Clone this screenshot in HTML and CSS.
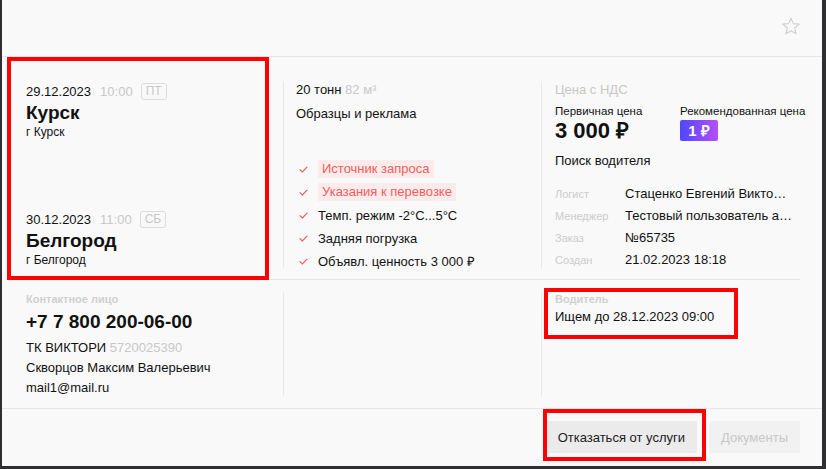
FILE: index.html
```html
<!DOCTYPE html>
<html lang="ru">
<head>
<meta charset="utf-8">
<title>Заявка</title>
<link rel="stylesheet" href="styles.css">
</head>
<body>
<div class="card">
  <header class="top">
    <svg class="star" width="18" height="18" viewBox="0 0 18 18"><polygon points="9,1.2 11.29,6.64 17.18,7.14 12.71,11.01 14.05,16.76 9,13.7 3.95,16.76 5.29,11.01 0.82,7.14 6.71,6.64" fill="none" stroke="#cfcfcf" stroke-width="1.1" stroke-linejoin="round"/></svg>
  </header>

  <section class="row row-main">
    <div class="col col-route">
      <div class="stop">
        <div class="when"><span class="date">29.12.2023</span><span class="time">10:00</span><span class="day">ПТ</span></div>
        <div class="city">Курск</div>
        <div class="addr">г Курск</div>
      </div>
      <div class="stop">
        <div class="when"><span class="date">30.12.2023</span><span class="time">11:00</span><span class="day">СБ</span></div>
        <div class="city">Белгород</div>
        <div class="addr">г Белгород</div>
      </div>
    </div>

    <div class="col col-cargo">
      <div class="line">20 тонн <span class="muted">82 м³</span></div>
      <div class="line cargo-name">Образцы и реклама</div>
      <ul class="checks">
        <li><svg class="tick" width="9" height="7" viewBox="0 0 9 7"><polyline points="0.7,3.4 3.3,6 8.3,0.8" fill="none" stroke="#f05353" stroke-width="1.1"/></svg><span class="hl">Источник запроса</span></li>
        <li><svg class="tick" width="9" height="7" viewBox="0 0 9 7"><polyline points="0.7,3.4 3.3,6 8.3,0.8" fill="none" stroke="#f05353" stroke-width="1.1"/></svg><span class="hl">Указания к перевозке</span></li>
        <li><svg class="tick" width="9" height="7" viewBox="0 0 9 7"><polyline points="0.7,3.4 3.3,6 8.3,0.8" fill="none" stroke="#f05353" stroke-width="1.1"/></svg><span>Темп. режим -2°C...5°C</span></li>
        <li><svg class="tick" width="9" height="7" viewBox="0 0 9 7"><polyline points="0.7,3.4 3.3,6 8.3,0.8" fill="none" stroke="#f05353" stroke-width="1.1"/></svg><span>Задняя погрузка</span></li>
        <li><svg class="tick" width="9" height="7" viewBox="0 0 9 7"><polyline points="0.7,3.4 3.3,6 8.3,0.8" fill="none" stroke="#f05353" stroke-width="1.1"/></svg><span>Объявл. ценность 3 000 ₽</span></li>
      </ul>
    </div>

    <div class="col col-price">
      <div class="line muted">Цена с НДС</div>
      <div class="prices">
        <div class="price">
          <div class="price-label">Первичная цена</div>
          <div class="price-value">3 000 ₽</div>
        </div>
        <div class="price">
          <div class="price-label">Рекомендованная цена</div>
          <div class="price-badge-wrap"><span class="price-badge">1 ₽</span></div>
        </div>
      </div>
      <div class="line status">Поиск водителя</div>
      <dl class="kv">
        <div class="kv-row"><dt>Логист</dt><dd>Стаценко Евгений Викторович</dd></div>
        <div class="kv-row"><dt>Менеджер</dt><dd>Тестовый пользователь админ</dd></div>
        <div class="kv-row"><dt>Заказ</dt><dd>№65735</dd></div>
        <div class="kv-row"><dt>Создан</dt><dd>21.02.2023 18:18</dd></div>
      </dl>
    </div>
  </section>

  <section class="row row-contact">
    <div class="col col-contact">
      <div class="label">Контактное лицо</div>
      <div class="phone">+7 7 800 200-06-00</div>
      <div class="info first">ТК ВИКТОРИ <span class="muted">5720025390</span></div>
      <div class="info">Скворцов Максим Валерьевич</div>
      <div class="info">mail1@mail.ru</div>
    </div>
    <div class="col col-empty"></div>
    <div class="col col-driver">
      <div class="label">Водитель</div>
      <div class="driver">Ищем до 28.12.2023 09:00</div>
    </div>
  </section>

  <footer class="actions">
    <button class="btn btn-main">Отказаться от услуги</button>
    <button class="btn btn-off">Документы</button>
  </footer>

  <div class="mark mark-route"></div>
  <div class="mark mark-driver"></div>
  <div class="mark mark-button"></div>
</div>
</body>
</html>
```
FILE: styles.css
```css
* { box-sizing: border-box; }
html, body { margin: 0; padding: 0; }
body {
  background: #2f2f31;
  font-family: "Liberation Sans", Arial, sans-serif;
  color: #111;
  width: 826px;
  height: 469px;
  overflow: hidden;
}
.card {
  position: relative;
  margin-left: 2px;
  width: 820px;
  height: 466px;
  background: #f9f9f9;
}
.top {
  height: 57px;
  border-bottom: 1px solid #e6e6e6;
  display: flex;
  justify-content: flex-end;
  align-items: flex-start;
  padding: 17px 22px 0 0;
}
.star { display: block; }

.row {
  display: grid;
  grid-template-columns: 257px 258px 259px;
}
.row-main {
  margin: 0 22px 0 24px;
  padding: 24px 0 11px;
  border-bottom: 1px solid #e6e6e6;
}
.row-main .col { height: 187px; }
.row-contact {
  padding: 12px 22px 12px 24px;
}
.row-contact .col { height: 104px; }
.col + .col {
  border-left: 1px solid #e8e8e8;
  padding-left: 13px;
}
.muted { color: #c8c8c8; }
.line { font-size: 13px; line-height: 18px; white-space: nowrap; }

/* route */
.col-route {
  display: flex;
  flex-direction: column;
  justify-content: space-between;
}
.when {
  display: flex;
  align-items: center;
  height: 20px;
  font-size: 13px;
}
.date { margin-right: 9px; }
.time { color: #c8c8c8; margin-right: 8px; }
.day {
  border: 1px solid #dcdcdc;
  border-radius: 3px;
  color: #c8c8c8;
  font-size: 12px;
  line-height: 15px;
  padding: 0 4px;
}
.city { font-size: 19px; font-weight: 700; line-height: 23px; }
.addr { font-size: 12px; line-height: 16px; }

/* cargo */
.col-cargo { padding-left: 12px !important; }
.cargo-name { margin-top: 6px; }
.checks {
  list-style: none;
  margin: 37px 0 0;
  padding: 0;
  display: flex;
  flex-direction: column;
  gap: 5px;
}
.checks li {
  display: flex;
  align-items: center;
  height: 18px;
  font-size: 13px;
  white-space: nowrap;
}
.tick { margin: 0 10px 0 3px; flex: none; }
.hl {
  background: #fcebeb;
  color: #f25e5e;
  line-height: 18px;
  padding: 0 4px;
}

/* price */
.prices {
  display: grid;
  grid-template-columns: 125px auto;
  margin-top: 4px;
}
.price-label { font-size: 11.5px; line-height: 16px; white-space: nowrap; }
.price-value { font-size: 22px; font-weight: 700; line-height: 24px; }
.price-badge-wrap { height: 24px; padding-top: 1px; }
.price-badge {
  display: inline-block;
  height: 21px;
  width: 38px;
  text-align: center;
  line-height: 21px;
  border-radius: 2px;
  background: linear-gradient(90deg, #4f46ff, #b64ef6);
  color: #fff;
  font-weight: 700;
  font-size: 15px;
}
.status { margin-top: 9px; }
.kv { margin: 15px 0 0; display: flex; flex-direction: column; gap: 4px; }
.kv-row { display: flex; align-items: baseline; height: 18px; }
.kv dt {
  width: 70px;
  flex: none;
  font-size: 11px;
  color: #cccccc;
  line-height: 18px;
}
.kv dd {
  margin: 0;
  font-size: 13px;
  line-height: 18px;
  width: 168px;
  white-space: nowrap;
  overflow: hidden;
  text-overflow: ellipsis;
}

/* contact */
.label {
  font-size: 11px;
  font-weight: 700;
  line-height: 14px;
  color: #d0d0d0;
}
.phone { margin-top: 4px; font-size: 19px; font-weight: 700; line-height: 24px; white-space: nowrap; }
.info { font-size: 13px; line-height: 20px; white-space: nowrap; }
.info.first { margin-top: 4px; }
.driver { margin-top: 2px; font-size: 13px; line-height: 18px; }

/* footer */
.actions {
  border-top: 1px solid #e6e6e6;
  display: flex;
  justify-content: flex-end;
  gap: 12px;
  padding: 12px 22px 0 0;
}
.btn {
  height: 32px;
  border: 0;
  border-radius: 0;
  font-family: inherit;
  font-size: 13px;
  padding: 0 12px;
  white-space: nowrap;
}
.btn-main { background: #ebebeb; color: #222; min-width: 151px; }
.btn-off { background: #f1f1f1; color: #c8c8c8; min-width: 91px; }

/* annotation overlays */
.mark {
  position: absolute;
  border: 4px solid #ff0000;
  pointer-events: none;
}
.mark-route { left: 5px; top: 57px; width: 262px; height: 223px; }
.mark-driver { left: 542px; top: 288px; width: 194px; height: 51px; }
.mark-button { left: 541px; top: 409px; width: 163px; height: 52px; }
```
